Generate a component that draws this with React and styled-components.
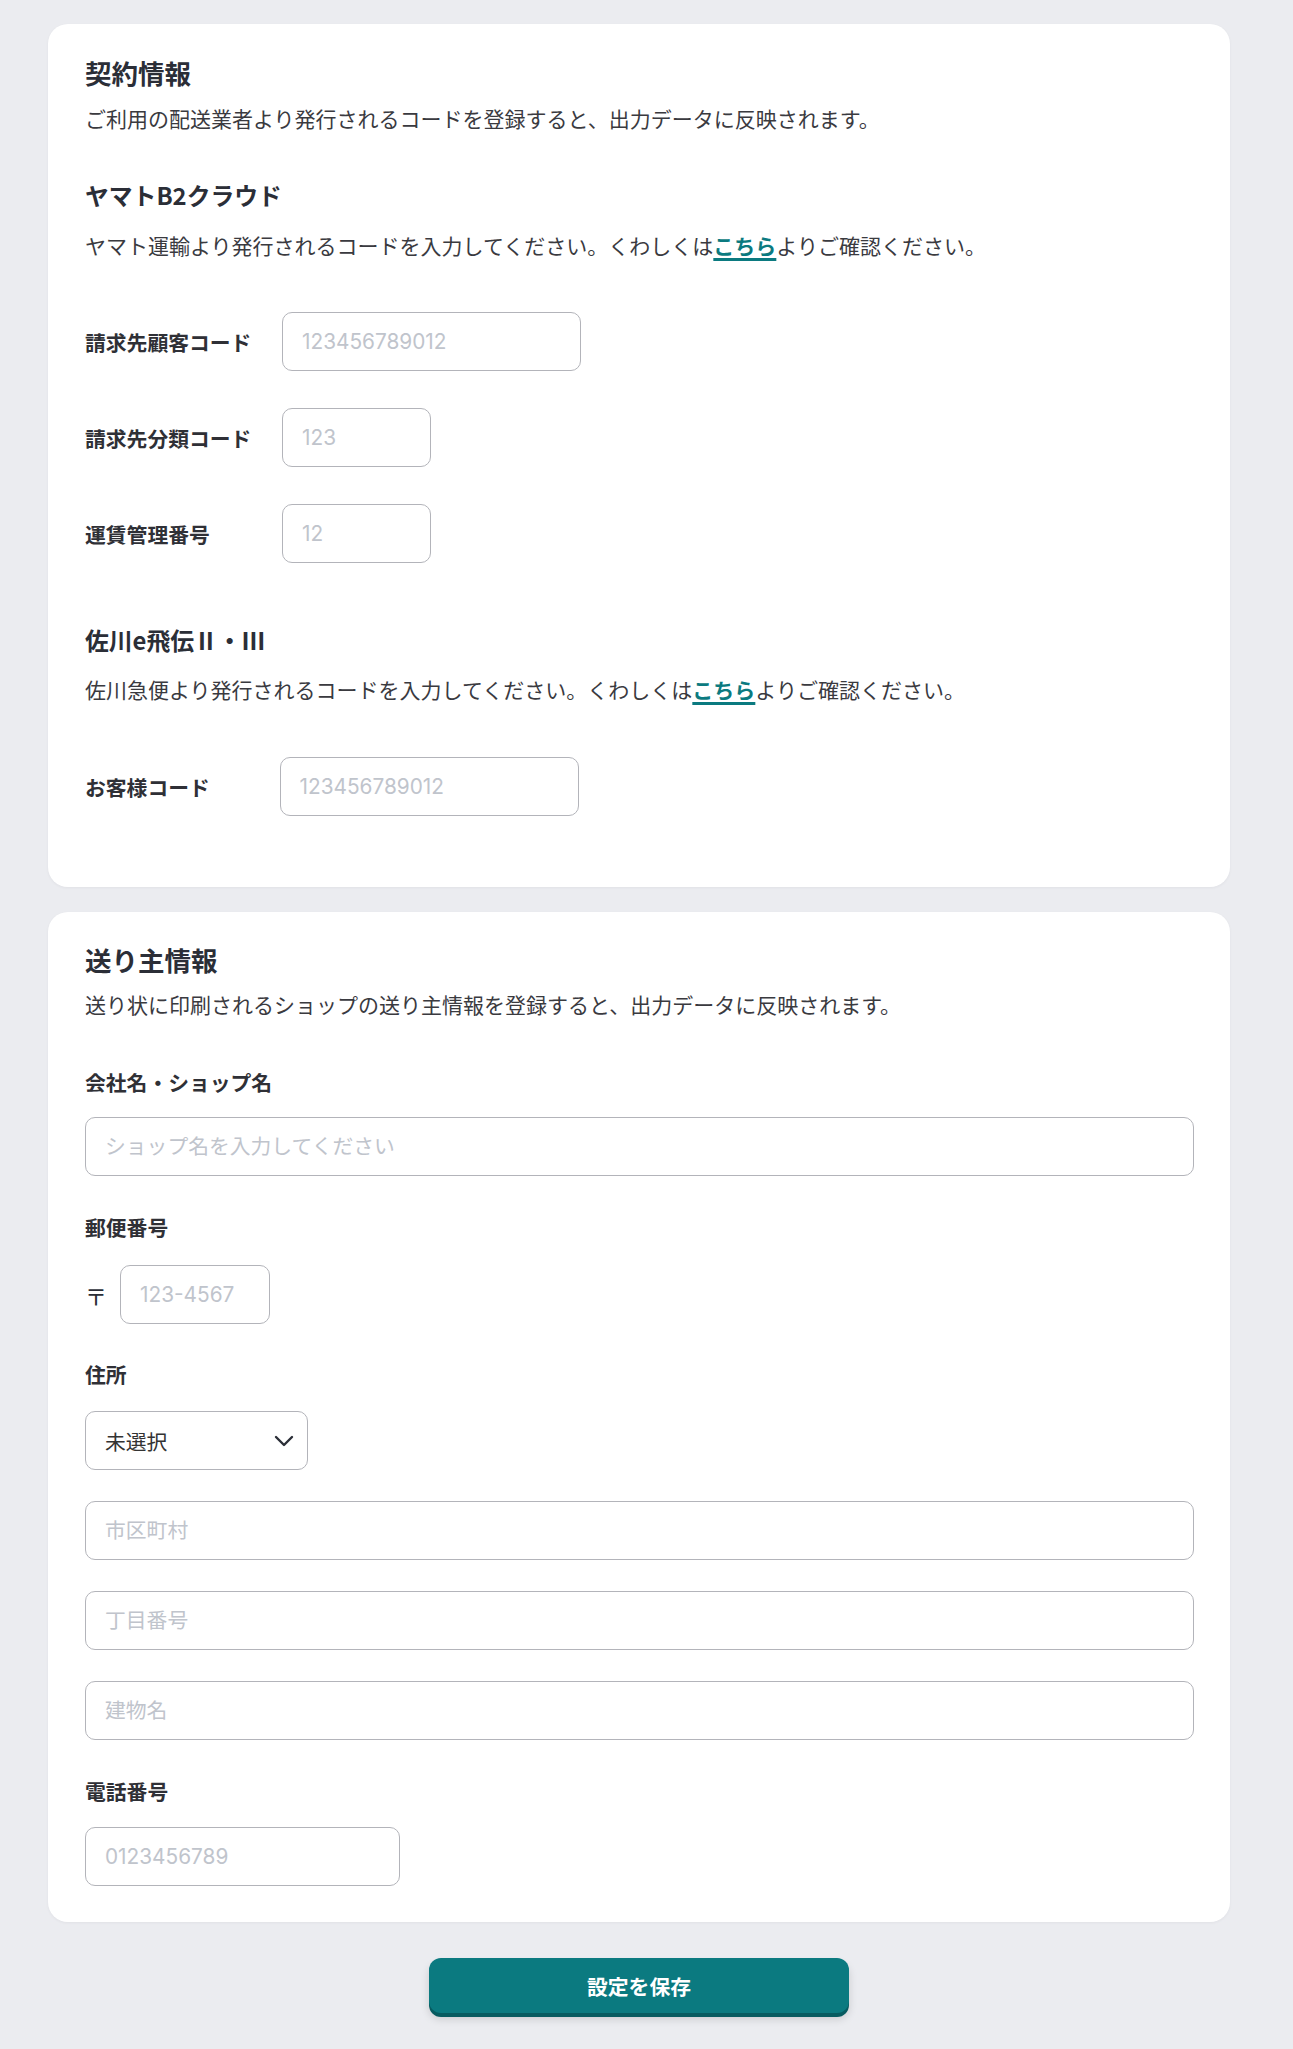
import React from 'react';
import styled, { createGlobalStyle } from 'styled-components';

const GlobalStyle = createGlobalStyle`
  body {
    margin: 0;
    background: #ebecf0;
    font-family: "Noto Sans CJK JP", "Noto Sans", sans-serif;
    color: #333338;
  }
`;

const Page = styled.div`
  padding: 24px 63px 31px 48px;
  display: flex;
  flex-direction: column;
`;

const Card = styled.section`
  background: #fff;
  border-radius: 20px;
  padding: ${p => p.$top}px 36px ${p => p.$bottom}px 37px;
  box-shadow: 0 1px 3px rgba(30, 35, 60, 0.05);
  display: flex;
  flex-direction: column;
  & + & {
    margin-top: 25px;
  }
`;

const Title = styled.h2`
  margin: 0;
  font-size: 26.5px;
  line-height: 36px;
  font-weight: 700;
  color: #2b2e37;
`;

const SubTitle = styled.h3`
  margin: ${p => p.$mt}px 0 0;
  font-size: 23.8px;
  line-height: 34px;
  font-weight: 700;
  color: #2b2e37;
`;

const Desc = styled.p`
  margin: ${p => p.$mt}px 0 0;
  font-size: 21px;
  line-height: 32px;
  color: #3a3a3f;
`;

const Link = styled.a`
  color: #0b7a80;
  font-weight: 700;
  text-decoration: underline;
  text-decoration-thickness: 2.5px;
  text-underline-offset: 4px;
  cursor: pointer;
`;

const FieldList = styled.div`
  margin-top: ${p => p.$mt}px;
  display: flex;
  flex-direction: column;
  gap: 37px;
`;

const FieldRow = styled.div`
  display: grid;
  grid-template-columns: ${p => p.$labelWidth}px auto;
  align-items: center;
`;

const Label = styled.label`
  font-size: 20.8px;
  line-height: 30px;
  font-weight: 700;
  color: #2f3036;
`;

const Group = styled.div`
  margin-top: ${p => p.$mt}px;
  display: flex;
  flex-direction: column;
  gap: ${p => p.$gap}px;
`;

const Stack = styled.div`
  display: flex;
  flex-direction: column;
  gap: 31px;
`;

const Input = styled.input`
  box-sizing: border-box;
  width: ${p => (p.$w ? `${p.$w}px` : '100%')};
  height: 59px;
  padding: 0 19px;
  border: 1.3px solid #b3b4ba;
  border-radius: 10px;
  background: #fff;
  font-family: "Inter", "Noto Sans CJK JP", sans-serif;
  font-size: 20.8px;
  color: #333;
  outline: none;
  &::placeholder {
    color: #c0c4cc;
  }
`;

const PostalRow = styled.div`
  display: flex;
  align-items: center;
  gap: 16px;
`;

const PostalMark = styled.span`
  font-size: 22px;
  color: #2b2e37;
  width: 19px;
`;

const SelectBox = styled.div`
  position: relative;
  width: 223px;
  height: 59px;
`;

const Select = styled.select`
  appearance: none;
  box-sizing: border-box;
  width: 100%;
  height: 100%;
  padding: 0 19px;
  border: 1.3px solid #b3b4ba;
  border-radius: 10px;
  background: #fff;
  font-family: "Noto Sans CJK JP", sans-serif;
  font-size: 20.8px;
  color: #333;
  outline: none;
`;

const Chevron = styled.svg`
  position: absolute;
  right: 14px;
  top: 50%;
  transform: translateY(-50%);
  pointer-events: none;
`;

const Footer = styled.div`
  width: 1182px;
  margin-top: 36px;
  display: flex;
  justify-content: center;
`;

const SaveButton = styled.button`
  width: 420px;
  height: 55px;
  border: none;
  border-radius: 12px;
  background: #0b7a80;
  color: #fff;
  font-family: "Noto Sans CJK JP", sans-serif;
  font-size: 20.8px;
  font-weight: 700;
  box-shadow: 0 4px 0 #075b60, 0 6px 8px rgba(0, 0, 0, 0.15);
  cursor: pointer;
`;

const yamatoFields = [
  { label: '請求先顧客コード', placeholder: '123456789012', w: 299 },
  { label: '請求先分類コード', placeholder: '123', w: 149 },
  { label: '運賃管理番号', placeholder: '12', w: 149 },
];

const App = () => {
  return (
    <>
      <GlobalStyle />
      <Page>
        <Card $top={31} $bottom={71}>
          <Title>契約情報</Title>
          <Desc $mt={11}>ご利用の配送業者より発行されるコードを登録すると、出力データに反映されます。</Desc>

          <SubTitle $mt={44}>ヤマトB2クラウド</SubTitle>
          <Desc $mt={17}>
            ヤマト運輸より発行されるコードを入力してください。くわしくは<Link>こちら</Link>よりご確認ください。
          </Desc>
          <FieldList $mt={51}>
            {yamatoFields.map(f => (
              <FieldRow key={f.label} $labelWidth={197}>
                <Label>{f.label}</Label>
                <Input placeholder={f.placeholder} $w={f.w} />
              </FieldRow>
            ))}
          </FieldList>

          <SubTitle $mt={60}>佐川e飛伝Ⅱ・Ⅲ</SubTitle>
          <Desc $mt={16}>
            佐川急便より発行されるコードを入力してください。くわしくは<Link>こちら</Link>よりご確認ください。
          </Desc>
          <FieldList $mt={52}>
            <FieldRow $labelWidth={194.5}>
              <Label>お客様コード</Label>
              <Input placeholder="123456789012" $w={299} />
            </FieldRow>
          </FieldList>
        </Card>

        <Card $top={30} $bottom={36}>
          <Title>送り主情報</Title>
          <Desc $mt={10}>送り状に印刷されるショップの送り主情報を登録すると、出力データに反映されます。</Desc>

          <Group $mt={47} $gap={20}>
            <Label>会社名・ショップ名</Label>
            <Input placeholder="ショップ名を入力してください" />
          </Group>

          <Group $mt={36} $gap={23}>
            <Label>郵便番号</Label>
            <PostalRow>
              <PostalMark>〒</PostalMark>
              <Input placeholder="123-4567" $w={150} />
            </PostalRow>
          </Group>

          <Group $mt={35} $gap={22}>
            <Label>住所</Label>
            <Stack>
              <SelectBox>
                <Select defaultValue="">
                  <option value="">未選択</option>
                </Select>
                <Chevron width="20" height="12" viewBox="0 0 20 12" fill="none">
                  <polyline points="2,2 10,10 18,2" stroke="#2b2e37" strokeWidth="2.4" strokeLinecap="round" strokeLinejoin="round" />
                </Chevron>
              </SelectBox>
              <Input placeholder="市区町村" />
              <Input placeholder="丁目番号" />
              <Input placeholder="建物名" />
            </Stack>
          </Group>

          <Group $mt={36} $gap={21}>
            <Label>電話番号</Label>
            <Input placeholder="0123456789" $w={315} />
          </Group>
        </Card>

        <Footer>
          <SaveButton>設定を保存</SaveButton>
        </Footer>
      </Page>
    </>
  );
};

export default App;
